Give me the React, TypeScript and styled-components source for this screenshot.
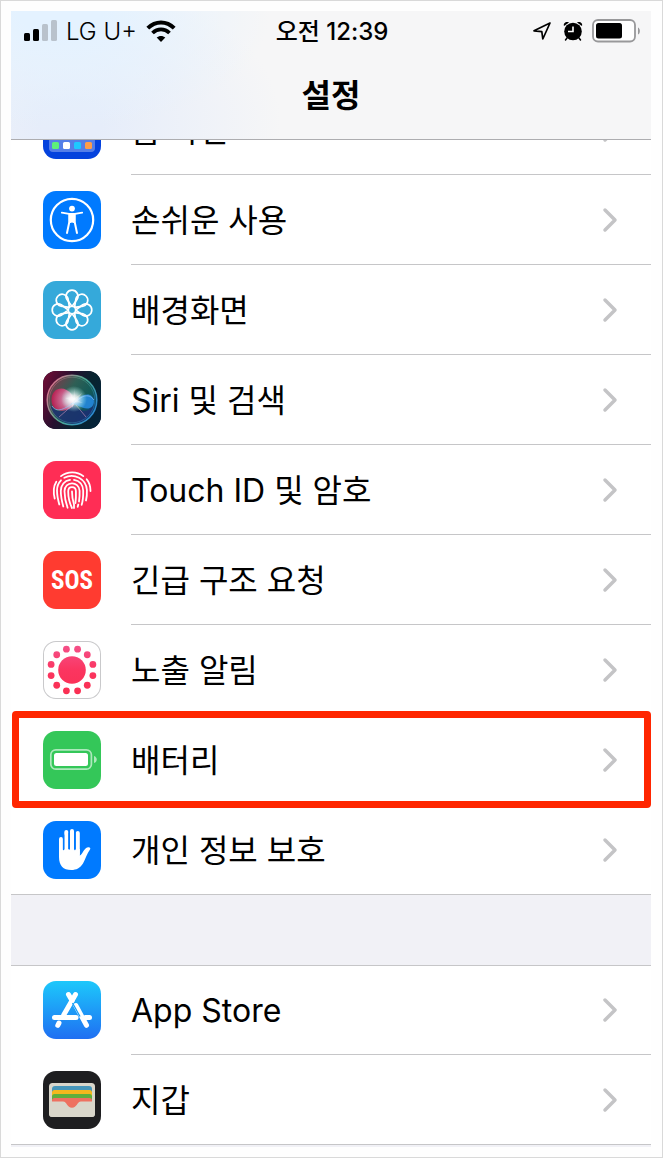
import React from "react";
import styled, { createGlobalStyle } from "styled-components";

const GlobalStyle = createGlobalStyle`
  *, *::before, *::after { box-sizing: border-box; }
  body {
    margin: 0;
    background: #fff;
    color: #000;
    font-family: Inter, "Noto Sans CJK KR", sans-serif;
  }
`;

const Frame = styled.div`
  min-height: 100vh;
  padding: 10px 11px 10px 10px;
  border: 1px solid #d9d9d9;
  background: #fefefe;
`;

const Screen = styled.main`
  overflow: hidden;
  padding-bottom: 2px;
  background: #f1f1f6;
`;

const Header = styled.header`
  position: relative;
  z-index: 1;
  border-bottom: 1px solid #adadb0;
  background:
    radial-gradient(ellipse 210px 120px at 50px 0, #e4f2ff 20%, rgba(228, 242, 255, 0) 100%),
    radial-gradient(ellipse 210px 140px at 60px 110px, #e6edfa 15%, rgba(230, 237, 250, 0) 100%),
    #f6f6f7;
`;

const StatusBar = styled.div`
  display: grid;
  grid-template-columns: 1fr auto 1fr;
  align-items: center;
  height: 40px;
  padding: 0 11px 0 13px;
  font-size: 24px;
  line-height: 32px;
`;

const StatusGroup = styled.div<{ $end?: boolean }>`
  display: flex;
  align-items: center;
  justify-content: ${(p) => (p.$end ? "flex-end" : "flex-start")};
  gap: ${(p) => (p.$end ? "9px" : "9px")};
`;

const Carrier = styled.span`
  padding-top: 2px;
  font-weight: 300;
`;

const Clock = styled.time`
  padding-top: 2px;
  font-weight: 500;
`;

const Title = styled.h1`
  display: flex;
  align-items: center;
  justify-content: center;
  height: 88px;
  margin: 0;
  padding-top: 2px;
  font-size: 32px;
  line-height: 40px;
  font-weight: 600;
`;

const Group = styled.ul<{ $scrolled?: boolean; $ruled?: boolean }>`
  margin: ${(p) => (p.$scrolled ? "-55px 0 0" : "0")};
  padding: 0;
  list-style: none;
  background: #fff;
  border-bottom: 1px solid #c6c6c8;
  box-shadow: ${(p) => (p.$ruled ? "inset 0 1px #c6c6c8" : "none")};
`;

const Gap = styled.div`
  height: 70px;
`;

const Item = styled.li`
  position: relative;
`;

const RowLink = styled.a`
  display: flex;
  align-items: center;
  gap: 30px;
  padding-left: 32px;
  color: inherit;
  text-decoration: none;
`;

const RowBody = styled.span`
  display: flex;
  flex: 1;
  align-items: center;
  justify-content: space-between;
  height: 90px;
  padding-right: 33px;
  border-bottom: 1px solid #c6c6c8;

  ${Item}:last-child & {
    height: 89px;
    border-bottom: 0;
  }
`;

const Label = styled.span`
  padding-top: 3px;
  font-size: 32px;
  line-height: 40px;
  font-weight: 400;
`;

const Tile = styled.span<{ $bg: string; $outlined?: boolean }>`
  display: flex;
  align-items: center;
  justify-content: center;
  flex: none;
  width: 58px;
  height: 58px;
  overflow: hidden;
  border-radius: 13px;
  background: ${(p) => p.$bg};
  box-shadow: ${(p) => (p.$outlined ? "inset 0 0 0 1px #c9c9cb" : "none")};

  svg { display: block; }
`;

const SosText = styled.span`
  padding-top: 2px;
  color: #fff;
  font-family: "Roboto Condensed", Roboto, sans-serif;
  font-size: 25px;
  line-height: 28px;
  font-weight: 700;
`;

const Highlight = styled.span`
  position: absolute;
  inset: -4px 0 -3px 1px;
  border: 7px solid #ff2600;
  border-radius: 4px;
  pointer-events: none;
`;

const Art = ({ children }: { children: React.ReactNode }) => (
  <svg width="58" height="58" viewBox="0 0 58 58" fill="none" aria-hidden="true">
    {children}
  </svg>
);

const HomeScreenIcon = () => (
  <Art>
    <rect x="6" y="36" width="46" height="15" rx="4" fill="#fff" opacity=".32" />
    <rect x="9" y="41" width="7" height="7" rx="1.5" fill="#5df07a" />
    <rect x="20" y="41" width="7" height="7" rx="1.5" fill="#fff" />
    <rect x="31" y="41" width="7" height="7" rx="1.5" fill="#1ec8ff" />
    <rect x="42" y="41" width="7" height="7" rx="1.5" fill="#ff9d4a" />
  </Art>
);

const AccessibilityIcon = () => (
  <Art>
    <circle cx="29" cy="29" r="21.2" stroke="#fff" strokeWidth="2.2" />
    <circle cx="29" cy="17.6" r="2.9" fill="#fff" />
    <path
      d="M18.8 21.6 L26 22.8 H32 L39.2 21.6"
      stroke="#fff"
      strokeWidth="1.8"
      strokeLinecap="round"
      strokeLinejoin="round"
    />
    <path
      d="M31.600 24 L31.700 31 L34 42 M26.400 24 L26.300 31 L24 42"
      stroke="#fff"
      strokeWidth="2"
      strokeLinecap="round"
      strokeLinejoin="round"
    />
    <path d="M25.5 22.5 H32.5 L32.2 32.500 L29 31.5 L25.8 32.500 Z" fill="#fff" />
  </Art>
);

const WallpaperIcon = () => (
  <Art>
    {[0, 45, 90, 135, 180, 225, 270, 315].map((a) => (
      <path
        key={a}
        d="M29 25.400 L23.800 18.200 A6 6 0 1 1 34.200 18.200 Z"
        transform={`rotate(${a} 29 29)`}
        stroke="#fff"
        strokeWidth="1.7"
        strokeLinejoin="round"
      />
    ))}
    <circle cx="29" cy="29" r="3.6" stroke="#fff" strokeWidth="1.4" />
  </Art>
);

const SiriIcon = () => (
  <Art>
    <defs>
      <linearGradient id="siriBack" x1="0" y1=".2" x2="1" y2=".6">
        <stop offset="0" stopColor="#6b0d35" />
        <stop offset=".4" stopColor="#26102f" />
        <stop offset=".7" stopColor="#08242f" />
        <stop offset="1" stopColor="#052338" />
      </linearGradient>
      <linearGradient id="siriOrb" x1="0" y1=".1" x2="1" y2=".8">
        <stop offset="0" stopColor="#8a3148" />
        <stop offset=".4" stopColor="#2f5f55" />
        <stop offset=".7" stopColor="#125a58" />
        <stop offset="1" stopColor="#0d3b7e" />
      </linearGradient>
      <linearGradient id="siriRing" x1="0" y1=".2" x2="1" y2=".8">
        <stop offset="0" stopColor="#f47896" />
        <stop offset=".5" stopColor="#55b99c" />
        <stop offset="1" stopColor="#2c8ee8" />
      </linearGradient>
      <radialGradient id="siriPink" cx=".8" cy=".5" r=".8">
        <stop offset="0" stopColor="#ffd5e8" />
        <stop offset=".45" stopColor="#dc6c9a" />
        <stop offset="1" stopColor="#c11950" />
      </radialGradient>
      <radialGradient id="siriGlow">
        <stop offset="0" stopColor="#fff" />
        <stop offset=".3" stopColor="#fff" stopOpacity=".8" />
        <stop offset="1" stopColor="#a9fff2" stopOpacity="0" />
      </radialGradient>
    </defs>
    <rect width="58" height="58" fill="url(#siriBack)" />
    <circle cx="29" cy="29" r="24.5" fill="url(#siriOrb)" />
    <path d="M7 33 C13 43 22 42 30 33 C38 42 45 42 51 34 C48 47 39 53 29 53 S10 47 7 33Z" fill="#1c2f70" opacity=".85" />
    <path d="M8.500 29 C8.500 16 22 14 28 23 C31 28 33 34 29 36 C20 43 8.500 40 8.500 29Z" fill="url(#siriPink)" opacity=".9" />
    <path d="M28 33 C34 27 41 22 47 24 C54 28 51 38 44 37.500 C38 37 35 34 28 33Z" fill="#2588dc" opacity=".9" />
    <path d="M9 35 C15 44 25 35 32 31 C38 26 45 21 51 29" stroke="#84b9f4" strokeWidth="1" opacity=".75" />
    <path d="M31 33 L16 46 M33 34 L43 46" stroke="#c992ba" strokeWidth="1" opacity=".6" />
    <circle cx="31" cy="28" r="13" fill="url(#siriGlow)" />
    <path d="M31 17 L32 27 L39 22 L34 29 L40 32 L32 31 L29 37 L29 30 L22 27 L29 26 L26 20 L31 25Z" fill="#fff" opacity=".3" />
    <circle cx="29" cy="29" r="24.8" stroke="url(#siriRing)" strokeWidth="1.5" opacity=".9" />
    <circle cx="29" cy="29" r="22.8" stroke="url(#siriRing)" strokeWidth=".6" opacity=".6" />
  </Art>
);

const TouchIdIcon = () => (
  <Art>
    <g stroke="#fff" strokeWidth="1.8" strokeLinecap="round">
      <path d="M11.700 37.500 C10.400 32 10.200 25.500 13.300 20.700" />
      <path d="M18 15.100 C24.500 10 34 10 40.300 15.100" />
      <path d="M43.700 18.300 C46.600 21.600 47.500 25 47.500 30" />
      <path d="M16.300 43.500 C14.500 37 14 33 14 29.500 C14 25 15.500 21.800 18 19.300 M21.300 16.800 C31 11.500 43.300 18 43.900 29 C44.100 33 43.900 36 43 39.500" />
      <path d="M20.300 45.500 C18.500 39 17.800 34 17.800 30 C17.800 24 21.500 19.600 27 18.800 M31 18.800 C36.500 19.700 40 24 40.200 29.500 C40.300 35 40 39.500 38.700 43.800" />
      <path d="M24.600 46.700 C22.500 41 21.500 35.500 21.500 30.300 C21.500 20 36 19.600 36.600 29.800 C36.800 34 36.500 37 36 40.500 M35.300 43.500 L34.700 45.800" />
      <path d="M29 47 C26.500 42 25.200 36 25.200 30.500 C25.200 24.800 32.700 24.800 32.900 30.300 C33.100 35 33 38 32.400 42" />
      <path d="M29 30.500 C29 36 29.500 39 31 43.500 V47" />
    </g>
  </Art>
);

const ExposureIcon = () => (
  <Art>
    <defs>
      <linearGradient id="exposure" x1="0" y1="4" x2="0" y2="54" gradientUnits="userSpaceOnUse">
        <stop offset="0" stopColor="#f4518a" />
        <stop offset=".5" stopColor="#fb3560" />
        <stop offset="1" stopColor="#fa2f52" />
      </linearGradient>
    </defs>
    <circle cx="29" cy="29" r="13.8" fill="url(#exposure)" />
    {Array.from({ length: 12 }, (_, i) => {
      const a = ((i * 30 + 15) * Math.PI) / 180;
      return (
        <circle
          key={i}
          cx={29 + 21.6 * Math.cos(a)}
          cy={29 + 21.6 * Math.sin(a)}
          r="3.4"
          fill="url(#exposure)"
        />
      );
    })}
  </Art>
);

const BatteryTileIcon = () => (
  <Art>
    <rect x="7.800" y="18.800" width="40.600" height="19.400" rx="5" stroke="#fff" strokeWidth="1.700" opacity=".6" />
    <rect x="11" y="22" width="34" height="13" rx="2.500" fill="#fff" />
    <path d="M51 25 C54.700 26 54.700 31 51 32Z" fill="#fff" opacity=".6" />
  </Art>
);

const HandIcon = () => (
  <Art>
    <g stroke="#fff" strokeWidth="4" strokeLinecap="round">
      <path d="M18 18 V34 M23.300 11 V32 M29 10 V32 M34.800 12 V33" />
    </g>
    <path
      d="M16 28 H36.800 V34.500 C39.500 33.500 40.800 27 45 26.200 C47 25.800 47.900 27.200 47 28.500 C44 32.500 42.500 38 40 42.500 C37 47 33.500 49 28.300 49 C20 49 16 44.500 16 36Z"
      fill="#fff"
    />
    <path d="M20.600 14 V28.500 M26.200 12 V28 M31.900 12 V28.500" stroke="#007aff" strokeWidth="1.500" strokeLinecap="round" />
  </Art>
);

const AppStoreIcon = () => (
  <Art>
    <g stroke="#fff" strokeWidth="5" strokeLinecap="round">
      <path d="M32.500 13.500 L20.700 34" />
      <path d="M25.500 13.500 L29 19.500" />
      <path d="M32.800 24.500 L43.500 44.300" />
      <path d="M11.500 36.500 H33" />
      <path d="M42.500 36.500 H46.500" />
      <path d="M16 42 L14.800 44.300" />
    </g>
    <path d="M29.500 22 L37 35.500" stroke="#159cf8" strokeWidth="1.300" />
  </Art>
);

const WalletIcon = () => (
  <Art>
    <rect x="6" y="12" width="46" height="34" rx="3.500" fill="#d9d6ca" />
    <path d="M9 18 a3 3 0 0 1 3-3 H46 a3 3 0 0 1 3 3 V22 H9Z" fill="#4796b9" />
    <path d="M9 21.500 a2.500 2.500 0 0 1 2.500-2.500 H46.500 a2.500 2.500 0 0 1 2.500 2.500 V26 H9Z" fill="#f4b81d" />
    <path d="M9 25.500 a2.500 2.500 0 0 1 2.500-2.500 H46.500 a2.500 2.500 0 0 1 2.500 2.500 V30 H9Z" fill="#5faf3c" />
    <path d="M9 29.500 a2.500 2.500 0 0 1 2.500-2.500 H46.500 a2.500 2.500 0 0 1 2.500 2.500 V38 H9Z" fill="#ee7160" />
    <path
      d="M6 30.500 H20 C24 30.500 24 36.800 29 36.800 S34 30.500 38 30.500 H52 V42.500 a3.500 3.500 0 0 1-3.500 3.500 H9.500 A3.500 3.500 0 0 1 6 42.500Z"
      fill="#d9d6ca"
    />
  </Art>
);

const Chevron = () => (
  <svg width="16" height="26" viewBox="0 0 16 26" fill="none" aria-hidden="true">
    <path d="M3 3 L13 13 L3 23" stroke="#c4c4c6" strokeWidth="3.500" strokeLinecap="round" strokeLinejoin="round" />
  </svg>
);

const SignalIcon = () => (
  <svg width="33" height="22" viewBox="0 0 33 22" aria-hidden="true">
    <rect x="0" y="13" width="6" height="8" rx="1.500" />
    <rect x="9" y="9" width="6" height="12" rx="1.500" />
    <rect x="18" y="4" width="6" height="17" rx="1.500" fill="#b9c2cc" />
    <rect x="27" y="0" width="6" height="21" rx="1.500" fill="#b9c2cc" />
  </svg>
);

const WifiIcon = () => (
  <svg width="30" height="22" viewBox="0 0 30 22" fill="none" aria-hidden="true">
    <path d="M1.800 8.200 C9.500 0.600 20.500 0.600 28.200 8.200" stroke="#000" strokeWidth="4" />
    <path d="M6.500 13 C11.500 8.200 18.500 8.200 23.500 13" stroke="#000" strokeWidth="3.800" />
    <path d="M15 22 L10.700 17.600 C13 15.400 17 15.400 19.300 17.600Z" fill="#000" />
  </svg>
);

const LocationIcon = () => (
  <svg width="22" height="20" viewBox="0 0 22 20" fill="none" aria-hidden="true">
    <path d="M18 2 L2 9.800 L9.800 10.600 L10.800 18Z" stroke="#000" strokeWidth="1.700" strokeLinejoin="round" />
  </svg>
);

const AlarmIcon = () => (
  <svg width="20" height="21" viewBox="0 0 20 21" aria-hidden="true">
    <circle cx="10" cy="10.500" r="8.800" />
    <path d="M1 5 C0 2.500 3 0 6 1.500Z M19 5 C20 2.500 17 0 14 1.500Z" />
    <path d="M4 17 L2.500 19 M16 17 L17.500 19" stroke="#000" strokeWidth="1.500" strokeLinecap="round" />
    <path d="M10 5.500 V10.500 H5" fill="none" stroke="#fff" strokeWidth="1.600" />
  </svg>
);

const StatusBatteryIcon = () => (
  <svg width="48" height="24" viewBox="0 0 48 24" fill="none" aria-hidden="true">
    <rect x="1" y="1" width="42" height="21.500" rx="5" fill="#fff" stroke="#98989a" strokeWidth="1.800" />
    <rect x="4" y="4" width="26" height="15.500" rx="2.500" fill="#000" />
    <path d="M46 8.500 C48.500 9.500 48.500 14.500 46 15.500Z" fill="#98989a" />
  </svg>
);

interface Entry {
  label: string;
  bg: string;
  icon: React.ReactNode;
  outlined?: boolean;
  highlighted?: boolean;
}

const device: Entry[] = [
  { label: "홈 화면", bg: "#0442dd", icon: <HomeScreenIcon /> },
  { label: "손쉬운 사용", bg: "#007aff", icon: <AccessibilityIcon /> },
  { label: "배경화면", bg: "#35a9da", icon: <WallpaperIcon /> },
  { label: "Siri 및 검색", bg: "#10182c", icon: <SiriIcon /> },
  { label: "Touch ID 및 암호", bg: "#ff2d55", icon: <TouchIdIcon /> },
  { label: "긴급 구조 요청", bg: "#ff3b30", icon: <SosText>SOS</SosText> },
  { label: "노출 알림", bg: "#fff", icon: <ExposureIcon />, outlined: true },
  { label: "배터리", bg: "#34c759", icon: <BatteryTileIcon />, highlighted: true },
  { label: "개인 정보 보호", bg: "#007aff", icon: <HandIcon /> },
];

const store: Entry[] = [
  { label: "App Store", bg: "linear-gradient(#1dc8fb, #1f6ff2)", icon: <AppStoreIcon /> },
  { label: "지갑", bg: "#1e1e20", icon: <WalletIcon /> },
];

const SettingsRow = ({ label, bg, icon, outlined, highlighted }: Entry) => (
  <Item>
    <RowLink href="#">
      <Tile $bg={bg} $outlined={outlined}>{icon}</Tile>
      <RowBody>
        <Label>{label}</Label>
        <Chevron />
      </RowBody>
    </RowLink>
    {highlighted && <Highlight />}
  </Item>
);

export default function App() {
  return (
    <>
      <GlobalStyle />
      <Frame>
        <Screen>
          <Header>
            <StatusBar>
              <StatusGroup>
                <SignalIcon />
                <Carrier>LG U+</Carrier>
                <WifiIcon />
              </StatusGroup>
              <Clock>오전 12:39</Clock>
              <StatusGroup $end>
                <LocationIcon />
                <AlarmIcon />
                <StatusBatteryIcon />
              </StatusGroup>
            </StatusBar>
            <Title>설정</Title>
          </Header>
          <Group $scrolled>
            {device.map((e) => <SettingsRow key={e.label} {...e} />)}
          </Group>
          <Gap />
          <Group $ruled>
            {store.map((e) => <SettingsRow key={e.label} {...e} />)}
          </Group>
        </Screen>
      </Frame>
    </>
  );
}
